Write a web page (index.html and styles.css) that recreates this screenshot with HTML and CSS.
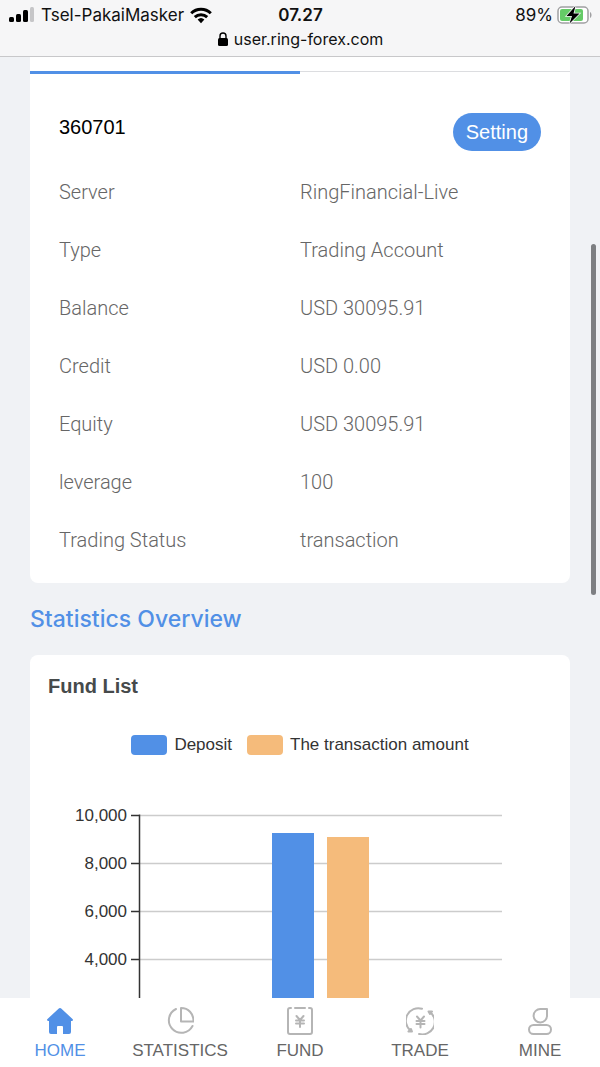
FILE: index.html
```html
<!DOCTYPE html>
<html lang="en">
  <head>
    <meta charset="UTF-8" />
    <meta name="viewport" content="width=device-width, initial-scale=1.0" />
    <title>Ring Forex</title>
    <link rel="stylesheet" href="styles.css">
  </head>

  <body>
    <!-- status bar + address -->
    <header class="browser-bar">
      <div class="status">
        <div class="carrier">
          <svg width="26" height="16" viewBox="0 0 26 16">
            <rect x="0" y="10" width="5" height="5" rx="1.5" />
            <rect x="7" y="7" width="5" height="8" rx="1.5" />
            <rect x="14" y="3" width="5" height="12" rx="1.5" />
            <rect x="21" y="0" width="4" height="15" rx="1.5" fill="#c6c6c8" />
          </svg>
          <span>Tsel-PakaiMasker</span>
          <svg width="22" height="17" viewBox="0 0 22 17" fill="none" stroke="#000" stroke-width="3">
            <path d="M1.2 6.2a14 14 0 0 1 19.6 0" />
            <path d="M4.8 10.2a9 9 0 0 1 12.4 0" />
            <path d="M7.6 12.6a5 5 0 0 1 6.8 0L11 16.2z" fill="#000" stroke="none" />
          </svg>
        </div>
        <div class="time">07.27</div>
        <div class="battery">
          <span>89%</span>
          <svg width="35" height="20" viewBox="0 0 35 20">
            <rect x="1" y="2" width="30" height="16" rx="4" fill="#fff" stroke="#a0a0a2" stroke-width="1.5" />
            <rect x="3" y="4" width="23" height="12" rx="2" fill="#65cb67" />
            <path d="M33 7c2 1 2 5 0 6z" fill="#a0a0a2" />
            <path d="M18.5 1L9.500 11h5.500L12.500 18.500 22.5 8.500h-6z" stroke="#f6f6f7" stroke-width="1.5" paint-order="stroke" />
          </svg>
        </div>
      </div>
      <div class="address">
        <svg width="10" height="15" viewBox="0 0 10 15">
          <rect x="0" y="6" width="10" height="8" rx="1.5" />
          <path d="M2 7V4a3 3 0 0 1 6 0v3" fill="none" stroke="#000" stroke-width="1.4" />
        </svg>
        <span>user.ring-forex.com</span>
      </div>
    </header>

    <main class="content">
      <section class="card account">
        <div class="tabs">
          <div class="tab active"></div>
          <div class="tab"></div>
        </div>
        <div class="account-head">
          <div class="account-no">360701</div>
          <button type="button" class="setting">Setting</button>
        </div>
        <table class="details">
          <tr><th scope="row">Server</th><td>RingFinancial-Live</td></tr>
          <tr><th scope="row">Type</th><td>Trading Account</td></tr>
          <tr><th scope="row">Balance</th><td>USD 30095.91</td></tr>
          <tr><th scope="row">Credit</th><td>USD 0.00</td></tr>
          <tr><th scope="row">Equity</th><td>USD 30095.91</td></tr>
          <tr><th scope="row">leverage</th><td>100</td></tr>
          <tr><th scope="row">Trading Status</th><td>transaction</td></tr>
        </table>
      </section>

      <h2 class="section-title">Statistics Overview</h2>

      <section class="card fund">
        <h3 class="fund-title">Fund List</h3>
        <div class="legend">
          <div class="legend-item"><i class="swatch deposit"></i>Deposit</div>
          <div class="legend-item"><i class="swatch amount"></i>The transaction amount</div>
        </div>
        <svg class="chart" viewBox="0 0 540 226">
          <g stroke="#ccc" stroke-width="1.5">
            <path d="M110 42.5H472M110 90.5H472M110 138.5H472M110 186.5H472" />
          </g>
          <g stroke="#333" stroke-width="1.5">
            <path d="M101 42.5h8M101 90.5h8M101 138.5h8M101 186.5h8M109.5 41.5V226" />
          </g>
          <g class="axis-labels">
            <text x="97" y="48">10,000</text>
            <text x="97" y="96">8,000</text>
            <text x="97" y="144">6,000</text>
            <text x="97" y="192">4,000</text>
          </g>
          <rect x="242" y="60" width="42" height="166" fill="#5190e6" />
          <rect x="297" y="64" width="42" height="162" fill="#f5bb7b" />
        </svg>
      </section>

      <div class="scroll-thumb"></div>
    </main>

    <!-- bottom nav -->
    <nav class="tabbar">
      <a href="#" class="active">
        <svg width="28" height="28" viewBox="0 0 28 28">
          <path d="M14 1c.6 0 1 .2 1.5.7L26.5 12c.9.9.6 2-.7 2H25v11a2 2 0 0 1-2 2h-6v-7a1 1 0 0 0-1-1h-4a1 1 0 0 0-1 1v7H5a2 2 0 0 1-2-2V14h-.8c-1.300 0-1.600-1.100-.7-2L12.500 1.700C13 1.200 13.400 1 14 1z" fill="#5190e6" />
        </svg>
        <span>HOME</span>
      </a>
      <a href="#">
        <svg width="28" height="28" viewBox="0 0 28 28">
          <path d="M10 2A12.5 12.5 0 1 0 26.500 19" />
          <path d="M15 1v13.500h12.500C27.500 6.500 22.500 1 15 1z" />
        </svg>
        <span>STATISTICS</span>
      </a>
      <a href="#">
        <svg width="28" height="28" viewBox="0 0 28 28">
          <path d="M5 1H4a2 2 0 0 0-2 2v22a2 2 0 0 0 2 2h20a2 2 0 0 0 2-2V3a2 2 0 0 0-2-2h-1M9 1h10" />
          <path d="M10.500 9l3.500 4 3.500-4M10 13.500h8M10 16.500h8M14 13v7" />
        </svg>
        <span>FUND</span>
      </a>
      <a href="#">
        <svg width="28" height="28" viewBox="0 0 28 28">
          <path d="M16 1.800A12.500 12.500 0 0 0 4.500 23.500M13 27A12.500 12.500 0 0 0 24.500 5.500" />
          <path d="M2.500 24.500h3.500L5 22zM26 4.500h-3.500L24 7z" fill="#b5b5b5" />
          <path d="M11 9.500l3.500 4 3.500-4M10.500 14h8M10.500 17h8M14.500 13.500v7" />
        </svg>
        <span>TRADE</span>
      </a>
      <a href="#">
        <svg width="28" height="28" viewBox="0 0 28 28">
          <path d="M14.500 2h6.500v6.500a6.700 6.700 0 1 1-6.500-6.500z" />
          <rect x="3" y="18" width="22" height="9" rx="4.5" />
        </svg>
        <span>MINE</span>
      </a>
    </nav>
  </body>
</html>
```
FILE: styles.css
```css
* {
  box-sizing: border-box;
}

body {
  margin: 0;
  height: 100vh;
  display: flex;
  flex-direction: column;
  background-color: #f0f2f5;
  font-family: "Liberation Sans", Arial, sans-serif;
}

/* status bar */
.browser-bar {
  height: 57px;
  flex-shrink: 0;
  padding: 3px 8px 0 9px;
  background-color: #f6f6f7;
  border-bottom: 1px solid #c8c8ca;
  font-family: Inter, sans-serif;
  font-size: 17px;
  line-height: 24px;
  color: #111;
}

.status {
  display: grid;
  grid-template-columns: 1fr auto 1fr;
}

.carrier,
.battery,
.address {
  display: flex;
  align-items: center;
  gap: 6px;
}

.time {
  font-weight: 600;
}

.battery {
  justify-content: flex-end;
  gap: 4px;
}

.address {
  justify-content: center;
  font-size: 16px;
}

/* page */
.content {
  flex: 1;
  min-height: 0;
  overflow: hidden;
  position: relative;
  padding: 0 30px;
}

.card {
  background-color: #fff;
  border-radius: 8px;
}

.account {
  border-top-left-radius: 0;
  border-top-right-radius: 0;
  padding-bottom: 14px;
}

.fund {
  padding-bottom: 20px;
}

.tabs {
  display: flex;
  height: 17px;
}

.tab {
  flex: 1;
  height: 15px;
  border-bottom: 1px solid #dcdde0;
}

.tab.active {
  height: 17px;
  border-bottom: 3px solid #5190e6;
}

.account-head {
  display: flex;
  justify-content: space-between;
  align-items: flex-start;
  padding: 39px 29px 12px;
}

.account-no {
  font-size: 20px;
  line-height: 28px;
  color: #000;
}

.setting {
  height: 38px;
  padding: 0 13px;
  border: none;
  border-radius: 19px;
  background-color: #5190e6;
  color: #fff;
  font-family: inherit;
  font-size: 20px;
  cursor: pointer;
}

.details {
  width: 100%;
  border-collapse: collapse;
  table-layout: fixed;
  font-family: Roboto, sans-serif;
  font-size: 20px;
  font-weight: 300;
  color: #666;
}

.details th,
.details td {
  height: 58px;
  padding: 0;
  text-align: left;
  font-weight: 300;
}

.details th {
  padding-left: 29px;
}

.section-title {
  margin: 0;
  font-family: Inter, sans-serif;
  font-size: 23px;
  font-weight: 500;
  line-height: 72px;
  color: #5190e6;
}

.fund-title {
  margin: 0;
  padding: 0 18px;
  font-size: 20px;
  line-height: 62px;
  color: #464a4b;
}

.legend {
  display: flex;
  justify-content: center;
  gap: 15px;
  font-size: 17px;
  line-height: 56px;
  color: #333;
}

.legend-item {
  display: flex;
  align-items: center;
  gap: 7px;
}

.swatch {
  width: 36px;
  height: 20px;
  border-radius: 4px;
}

.deposit {
  background-color: #5190e6;
}

.amount {
  background-color: #f5bb7b;
}

.chart {
  display: block;
  width: 100%;
}

.axis-labels {
  font-size: 17px;
  fill: #333;
  text-anchor: end;
}

.scroll-thumb {
  position: absolute;
  top: 187px;
  right: 4px;
  width: 5px;
  height: 351px;
  border-radius: 3px;
  background-color: #7d7f82;
}

/* bottom nav */
.tabbar {
  display: flex;
  flex-shrink: 0;
  height: 69px;
  padding-top: 9px;
  background-color: #fff;
}

.tabbar a {
  flex: 1;
  display: flex;
  flex-direction: column;
  align-items: center;
  gap: 4px;
  font-size: 17px;
  line-height: 24px;
  color: #666;
  text-decoration: none;
}

.tabbar svg {
  fill: none;
  stroke: #b5b5b5;
  stroke-width: 2;
  stroke-linecap: round;
  stroke-linejoin: round;
}

.tabbar .active {
  color: #5190e6;
}

.tabbar .active svg {
  stroke: none;
}
```
